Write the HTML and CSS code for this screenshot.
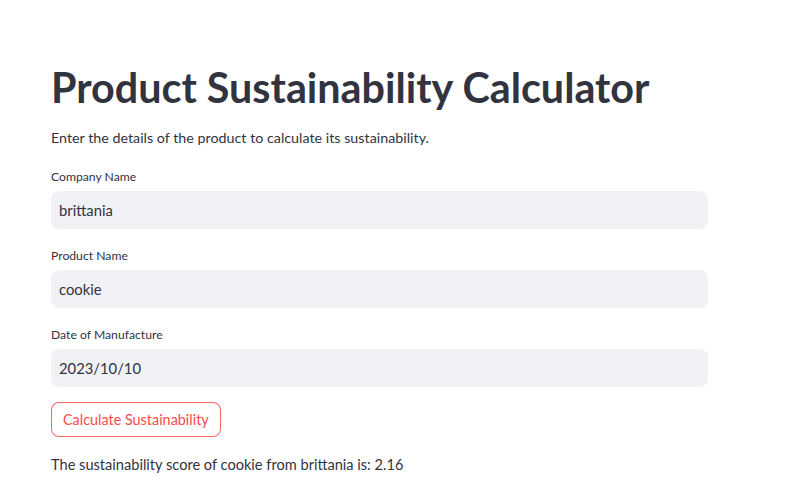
FILE: index.html
```html
<!DOCTYPE html>
<html lang="en">

<head>
    <meta charset="UTF-8">
    <meta name="viewport" content="width=device-width, initial-scale=1.0">
    <title>Product Sustainability Calculator</title>
    <link rel="stylesheet" href="styles.css">
</head>

<body>
    <div class="main">
        <h1 class="title">Product Sustainability Calculator</h1>
        <p class="intro">Enter the details of the product to calculate its sustainability.</p>

        <div class="field">
            <label class="label">Company Name</label>
            <div class="input">brittania</div>
        </div>

        <div class="field">
            <label class="label">Product Name</label>
            <div class="input">cookie</div>
        </div>

        <div class="field">
            <label class="label">Date of Manufacture</label>
            <div class="input">2023/10/10</div>
        </div>

        <div class="actions">
            <button class="btn">Calculate Sustainability</button>
        </div>

        <p class="result">The sustainability score of cookie from brittania is: 2.16</p>
    </div>
</body>

</html>
```

FILE: styles.css
```css
body {
    font-family: Lato, "Noto Sans", sans-serif;
    margin: 0;
    background: #fff;
    color: #31333f;
}

.main {
    width: 657px;
    padding: 60px 0 0 51px;
}

.title {
    font-size: 41.3px;
    font-weight: 700;
    margin: 0;
    line-height: 54px;
}

.intro {
    font-size: 14.3px;
    margin: 13px 0 0;
    line-height: 22px;
}

.field {
    margin-top: 19px;
}

.label {
    display: block;
    font-size: 12.2px;
    line-height: 18px;
    margin-bottom: 5px;
}

.input {
    height: 38px;
    background: #f0f2f6;
    border-radius: 8px;
    padding: 0 8px;
    display: flex;
    align-items: center;
    font-size: 14.8px;
}

.field + .field {
    margin-top: 18px;
}

.actions {
    margin-top: 15px;
}

.btn {
    font-family: inherit;
    font-size: 14.4px;
    color: #ff4b4b;
    background: #fff;
    border: 1px solid rgba(255, 75, 75, 0.85);
    border-radius: 8px;
    height: 35px;
    padding: 0 11px;
    cursor: pointer;
}

.result {
    font-size: 14.6px;
    margin: 17px 0 0;
    line-height: 22px;
}
```
